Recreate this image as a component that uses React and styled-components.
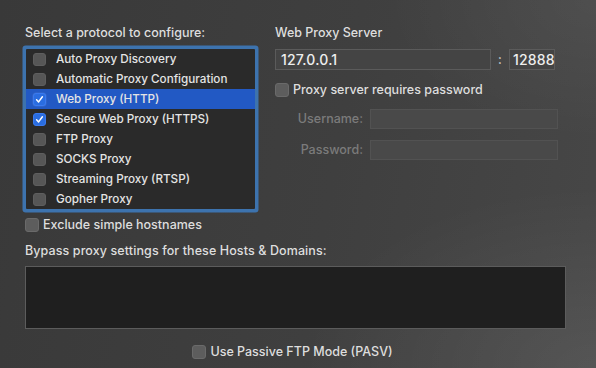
import React from 'react';
import styled, { createGlobalStyle } from 'styled-components';

const Global = createGlobalStyle`
  html, body {
    margin: 0;
    padding: 0;
    background: #3c3c3c;
  }
  * {
    box-sizing: border-box;
  }
`;

const Pane = styled.div`
  width: 596px;
  height: 368px;
  padding: 25px 30px 0 25px;
  overflow: hidden;
  font-family: 'Inter', 'Liberation Sans', sans-serif;
  font-size: 12.5px;
  font-weight: 500;
  line-height: 16px;
  color: #dedede;
  background:
    radial-gradient(ellipse 420px 260px at 100% 100%, rgba(255, 255, 255, 0.08), transparent 70%),
    radial-gradient(ellipse 300px 200px at 100% 0%, rgba(255, 255, 255, 0.05), transparent 70%),
    linear-gradient(100deg, #393939 0%, #3f3f3f 55%, #474747 100%);
`;

const Top = styled.div`
  display: flex;
  gap: 16px;
`;

const LeftCol = styled.div`
  width: 234px;
  display: flex;
  flex-direction: column;
`;

const RightCol = styled.div`
  flex: 1;
  display: flex;
  flex-direction: column;
`;

const Label = styled.div`
  color: ${(p) => (p.$disabled ? '#7b7b7b' : '#dedede')};
  white-space: nowrap;
`;

const ListBox = styled.div`
  margin: 8px 0 0 1px;
  width: 229px;
  height: 160px;
  background: #2a2a2a;
  box-shadow: 0 0 0 3.5px #3d73ae;
  border-radius: 1px;
`;

const Row = styled.div`
  height: 20px;
  display: flex;
  align-items: center;
  gap: 10px;
  padding-left: 7px;
  font-size: 11.7px;
  color: #e4e4e4;
  background: ${(p) => (p.$selected ? '#2259c4' : 'transparent')};
  white-space: nowrap;
`;

const Box = styled.span`
  flex: none;
  width: ${(p) => p.$size || 13}px;
  height: ${(p) => p.$size || 13}px;
  border-radius: 3px;
  display: inline-flex;
  align-items: center;
  justify-content: center;
  background: ${(p) => (p.$checked ? '#2a6de0' : p.$inList ? '#565656' : '#5d5d5d')};
  border: 1px solid ${(p) => (p.$checked ? '#3a7af0' : p.$inList ? '#5e5e5e' : '#6a6a6a')};
  box-shadow: ${(p) => (p.$selected ? '0 0 0 0.5px #3b6cc9' : 'none')};
`;

const Check = ({ checked, inList, size, selected }) => (
  <Box $checked={checked} $inList={inList} $size={size} $selected={selected}>
    {checked && (
      <svg width="9" height="9" viewBox="0 0 9 9">
        <path
          d="M1.6 4.8 L3.6 6.9 L7.4 1.8"
          fill="none"
          stroke="#ffffff"
          strokeWidth="1.5"
          strokeLinecap="round"
          strokeLinejoin="round"
        />
      </svg>
    )}
  </Box>
);

const CheckRow = styled.div`
  display: flex;
  align-items: center;
  gap: ${(p) => p.$gap || 4}px;
  height: 14px;
  white-space: nowrap;
  color: #dedede;
`;

const FieldRow = styled.div`
  display: flex;
  align-items: center;
  margin-top: 8px;
`;

const Field = styled.div`
  height: ${(p) => p.$h || 21}px;
  width: ${(p) => p.$w}px;
  padding: 0 ${(p) => p.$pad ?? 5}px;
  display: flex;
  align-items: center;
  color: #eeeeee;
  font-size: 14px;
  font-weight: 500;
  letter-spacing: 0.2px;
  background: ${(p) => (p.$disabled ? '#494949' : '#444444')};
  border: 1px solid ${(p) => (p.$disabled ? '#525252' : '#5b5b5b')};
`;

const Colon = styled.span`
  width: 18px;
  text-align: center;
  color: #d8d8d8;
`;

const CredGrid = styled.div`
  display: grid;
  grid-template-columns: 88px 188px;
  column-gap: 7px;
  row-gap: 11px;
  margin-top: 12px;
  align-items: center;
`;

const CredLabel = styled(Label)`
  text-align: right;
`;

const Bottom = styled.div`
  display: flex;
  flex-direction: column;
`;

const BypassLabel = styled(Label)`
  margin-top: 11px;
  letter-spacing: 0.1px;
`;

const TextArea = styled.div`
  margin-top: 7px;
  width: 541px;
  height: 63px;
  background: #1f1f1f;
  border: 1px solid #5c5c5c;
`;

const Center = styled.div`
  display: flex;
  justify-content: center;
  margin-top: 16px;
  padding-right: 6px;
`;

const protocols = [
  { name: 'Auto Proxy Discovery', on: false },
  { name: 'Automatic Proxy Configuration', on: false },
  { name: 'Web Proxy (HTTP)', on: true, selected: true },
  { name: 'Secure Web Proxy (HTTPS)', on: true },
  { name: 'FTP Proxy', on: false },
  { name: 'SOCKS Proxy', on: false },
  { name: 'Streaming Proxy (RTSP)', on: false },
  { name: 'Gopher Proxy', on: false },
];

export default function App() {
  return (
    <>
      <Global />
      <Pane>
        <Top>
          <LeftCol>
            <Label>Select a protocol to configure:</Label>
            <ListBox>
              {protocols.map((p) => (
                <Row key={p.name} $selected={p.selected}>
                  <Check checked={p.on} inList selected={p.selected} />
                  {p.name}
                </Row>
              ))}
            </ListBox>
            <CheckRow style={{ marginTop: 9 }} $gap={4}>
              <Check size={14} />
              Exclude simple hostnames
            </CheckRow>
          </LeftCol>
          <RightCol>
            <Label>Web Proxy Server</Label>
            <FieldRow>
              <Field $w={216}>127.0.0.1</Field>
              <Colon>:</Colon>
              <Field $w={46} $pad={3}>12888</Field>
            </FieldRow>
            <CheckRow style={{ marginTop: 13 }} $gap={4}>
              <Check size={14} />
              Proxy server requires password
            </CheckRow>
            <CredGrid>
              <CredLabel $disabled>Username:</CredLabel>
              <Field $w={188} $h={20} $disabled />
              <CredLabel $disabled>Password:</CredLabel>
              <Field $w={188} $h={20} $disabled />
            </CredGrid>
          </RightCol>
        </Top>
        <Bottom>
          <BypassLabel>Bypass proxy settings for these Hosts &amp; Domains:</BypassLabel>
          <TextArea />
          <Center>
            <CheckRow $gap={4}>
              <Check size={14} />
              Use Passive FTP Mode (PASV)
            </CheckRow>
          </Center>
        </Bottom>
      </Pane>
    </>
  );
}
